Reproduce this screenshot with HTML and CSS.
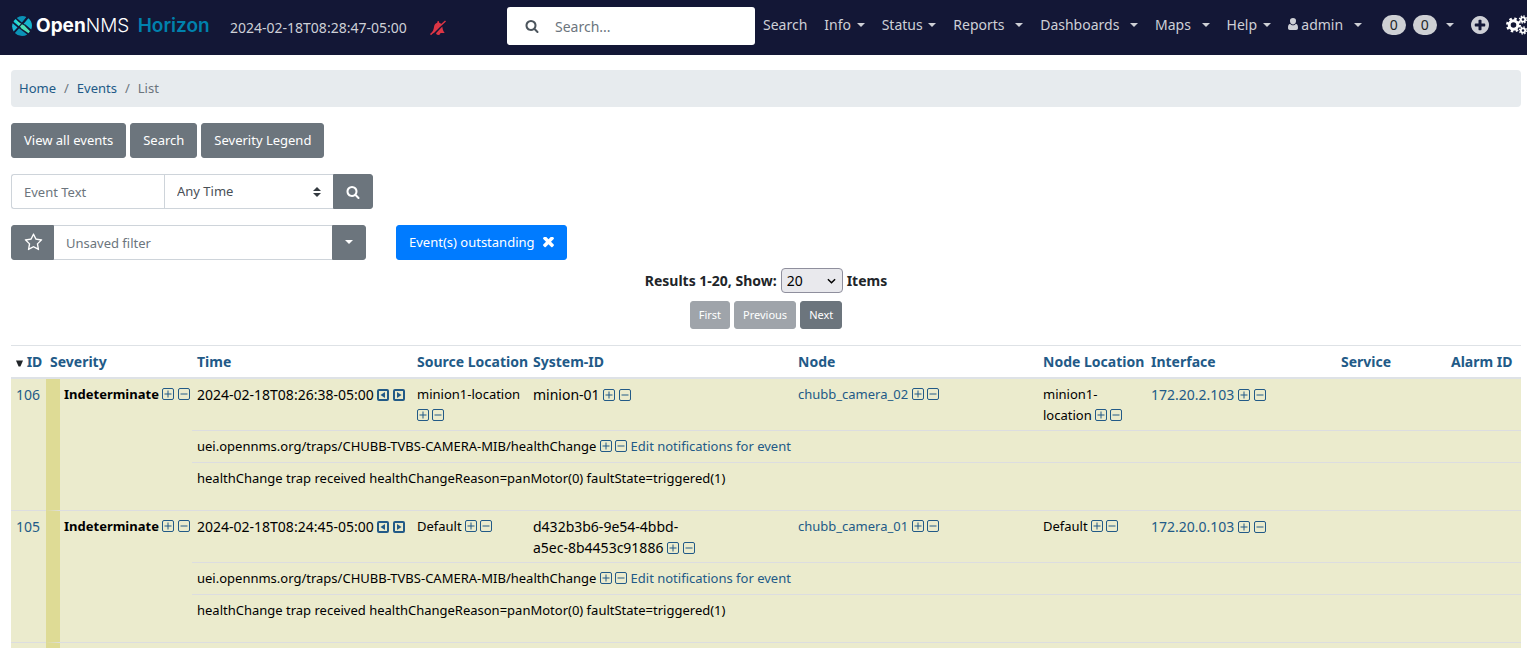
FILE: index.html
```html
<!DOCTYPE html>
<html lang="en">
<head>
<meta charset="utf-8">
<title>Events | OpenNMS Horizon</title>
<link rel="stylesheet" href="styles.css">
</head>
<body>
<svg class="sprite" aria-hidden="true">
  <symbol id="search" viewBox="0 0 1792 1792"><path d="M1216 832q0-185-131.500-316.500t-316.500-131.500-316.500 131.500-131.500 316.500 131.500 316.500 316.500 131.500 316.500-131.500 131.500-316.500zm512 832q0 52-38 90t-90 38q-54 0-90-38l-343-342q-179 124-399 124-143 0-273.500-55.500t-225-150-150-225-55.500-273.500 55.500-273.500 150-225 225-150 273.500-55.500 273.500 55.500 225 150 150 225 55.500 273.500q0 220-124 399l343 343q37 37 37 90z"/></symbol>
  <symbol id="star" viewBox="0 0 1792 1792"><path d="M1201 1004l306-297-422-62-189-382-189 382-422 62 306 297-73 421 378-199 377 199zm527-357q0 22-26 48l-363 354 86 500q1 7 1 20 0 50-41 50-19 0-40-12l-449-236-449 236q-22 12-40 12-21 0-31.500-14.500t-10.500-35.500q0-6 2-20l86-500-364-354q-25-27-25-48 0-37 56-46l502-73 225-455q19-41 49-41t49 41l225 455 502 73q56 9 56 46z"/></symbol>
  <symbol id="times" viewBox="300 450 1192 1192"><path d="M1490 1322q0 40-28 68l-136 136q-28 28-68 28t-68-28l-294-294-294 294q-28 28-68 28t-68-28l-136-136q-28-28-28-68t28-68l294-294-294-294q-28-28-28-68t28-68l136-136q28-28 68-28t68 28l294 294 294-294q28-28 68-28t68 28l136 136q28 28 28 68t-28 68l-294 294 294 294q28 28 28 68z"/></symbol>
  <symbol id="plus-circle" viewBox="128 128 1536 1536"><path d="M1344 960v-128q0-26-19-45t-45-19h-256v-256q0-26-19-45t-45-19h-128q-26 0-45 19t-19 45v256h-256q-26 0-45 19t-19 45v128q0 26 19 45t45 19h256v256q0 26 19 45t45 19h128q26 0 45-19t19-45v-256h256q26 0 45-19t19-45zm320-64q0 209-103 385.500t-279.500 279.500-385.500 103-385.500-103-279.500-279.500-103-385.500 103-385.500 279.500-279.500 385.500-103 385.500 103 279.500 279.500 103 385.500z"/></symbol>
  <symbol id="plus" viewBox="0 0 12 12"><rect x=".5" y=".5" width="11" height="11" rx="1.500" fill="none" stroke="currentColor"/><path d="M2.500 5.500h7v1h-7zM5.500 2.500h1v7h-1z"/></symbol>
  <symbol id="minus" viewBox="0 0 12 12"><rect x=".5" y=".5" width="11" height="11" rx="1.500" fill="none" stroke="currentColor"/><path d="M2.500 5.500h7v1h-7z"/></symbol>
  <symbol id="before" viewBox="0 0 12 12"><rect x="1" y="1" width="10" height="10" rx="1" fill="none" stroke="currentColor" stroke-width="2"/><path d="M8 3v6L3.500 6z"/></symbol>
  <symbol id="after" viewBox="0 0 12 12"><rect x="1" y="1" width="10" height="10" rx="1" fill="none" stroke="currentColor" stroke-width="2"/><path d="M4 3v6l4.500-3z"/></symbol>
</svg>

<header class="navbar">
  <a class="brand" href="#" aria-label="OpenNMS Horizon home">
    <svg class="brand-mark" viewBox="0 0 20 20" aria-hidden="true">
      <path fill="#14d1df" d="M3.600 2.900 9 8.300 6.900 10.300 1.500 5.700A10 10 0 0 1 3.600 2.900z"/>
      <path fill="#0b93b7" d="M4.700 1.900A10 10 0 0 1 14.400 1L10 6.800z"/>
      <path fill="#14b4cd" d="M16.300 2.300A10 10 0 0 1 19.200 13.500L13.400 8.500 11.500 7.900z"/>
      <path fill="#1bb8d5" d="M.6 7.200 5.700 11.600 1.700 15.400A10 10 0 0 1 .6 7.200z"/>
      <path fill="#0b93b7" d="M7 12.300 15.300 18.400A10 10 0 0 1 2.900 17z"/>
      <path fill="#4ee0b5" d="M3 4.200 12.300 9.600 18 15.200 16.500 17.300 9.500 12.600z"/>
      <path stroke="#131736" stroke-width="1.200" d="M15.800.8 1.400 17.200"/>
    </svg>
    <span class="brand-text"><b>Open</b>NMS <span class="brand-product">Horizon</span></span>
  </a>
  <span class="clock">2024-02-18T08:28:47-05:00</span>
  <svg class="bell" viewBox="0 0 16 16" role="img" aria-label="Notices off"><path fill="#dc3545" d="M1 13.200C3 11.500 3.600 9.500 4 7 4.300 4.500 5.800 3 7.300 2.700V2c0-1.200 1.800-1.200 1.800 0v.7c1.200.3 2.200 1.100 2.800 2.200L4 13.200zM12.300 6.600c.3 2.500.8 4.400 2.400 6.400H10.500a2.300 2.300 0 0 1-4.500.3zM0 14 15 .6l1 1L1 15.200z"/><path stroke="#131736" stroke-width=".5" d="M1.500 15.500 16 2.600"/></svg>
  <form class="nav-search">
    <svg class="icon-14" aria-hidden="true"><use href="#search"/></svg>
    <input type="search" aria-label="Search" placeholder="Search...">
  </form>
  <nav class="menu">
    <a href="#">Search</a>
    <a href="#">Info <i class="caret"></i></a>
    <a href="#">Status <i class="caret"></i></a>
    <a href="#">Reports <i class="caret wide"></i></a>
    <a href="#">Dashboards <i class="caret wide"></i></a>
    <a href="#">Maps <i class="caret wide"></i></a>
    <a href="#">Help <i class="caret"></i></a>
    <a href="#"><svg class="user" viewBox="0 0 10 12" aria-hidden="true"><path d="M5 0a3 3 0 0 1 3 3.200C8 5 6.700 6.500 5 6.500S2 5 2 3.200A3 3 0 0 1 5 0zM2.200 5.800C3.500 7.800 6.500 7.800 7.800 5.800 9.400 6 10 7.500 10 10c0 1.300-.7 2-1.800 2H1.800C.7 12 0 11.300 0 10c0-2.500.6-4 2.200-4.200z"/></svg> admin <i class="caret wide"></i></a>
    <a class="notices" href="#"><span class="badge">0</span><span class="badge">0</span><i class="caret"></i></a>
    <a href="#" aria-label="Quick add"><svg class="add" aria-hidden="true"><use href="#plus-circle"/></svg></a>
    <a href="#" aria-label="Configure"><svg class="cogs" viewBox="0 0 22 20" aria-hidden="true"><circle cx="7.500" cy="10" r="4.300" stroke-width="3"/><circle cx="7.500" cy="10" r="6.300" stroke-width="2.400" stroke-dasharray="2.480 2.468"/><circle cx="17" cy="4.500" r="2.200" stroke-width="1.800"/><circle cx="17" cy="4.500" r="3.500" stroke-width="1.400" stroke-dasharray="1.370 1.379"/><circle cx="17" cy="15.500" r="2.200" stroke-width="1.800"/><circle cx="17" cy="15.500" r="3.500" stroke-width="1.400" stroke-dasharray="1.370 1.379"/></svg></a>
  </nav>
</header>

<main class="content">
  <nav class="breadcrumb" aria-label="Breadcrumb">
    <a href="#">Home</a><span>/</span><a href="#">Events</a><span>/</span><span>List</span>
  </nav>

  <div class="actions">
    <button class="btn" type="button">View all events</button>
    <button class="btn" type="button">Search</button>
    <button class="btn" type="button">Severity Legend</button>
  </div>

  <form class="group">
    <input class="field event-text" type="text" aria-label="Event text" placeholder="Event Text">
    <select class="field time-select" aria-label="Time range"><option>Any Time</option></select>
    <button class="btn" type="button" aria-label="Search events"><svg class="icon-14" aria-hidden="true"><use href="#search"/></svg></button>
  </form>

  <div class="filters">
    <div class="group">
      <button class="btn btn-star" type="button" aria-label="Save filter"><svg class="star" aria-hidden="true"><use href="#star"/></svg></button>
      <input class="field filter-name" type="text" aria-label="Filter name" placeholder="Unsaved filter">
      <button class="btn" type="button" aria-label="Choose filter"><i class="caret"></i></button>
    </div>
    <button class="btn btn-primary" type="button">Event(s) outstanding <svg class="times" aria-hidden="true"><use href="#times"/></svg></button>
  </div>

  <div class="results">
    <label for="limit">Results 1-20, Show:</label>
    <select id="limit" class="limit"><option>20</option></select>
    <span>Items</span>
  </div>
  <div class="pager">
    <button class="btn btn-sm" type="button" disabled>First</button>
    <button class="btn btn-sm" type="button" disabled>Previous</button>
    <button class="btn btn-sm" type="button">Next</button>
  </div>

  <table class="events">
    <colgroup><col class="c-id"><col class="c-severity"><col class="c-time"><col class="c-source"><col class="c-system"><col class="c-node"><col class="c-nodeloc"><col class="c-interface"><col class="c-service"><col class="c-alarm"></colgroup>
    <thead>
      <tr>
        <th class="sorted"><svg class="sort" viewBox="0 0 8 7" aria-hidden="true"><path d="M0 0h8L5 7H3z"/></svg> <a href="#">ID</a></th>
        <th class="sev-head"><a href="#">Severity</a></th>
        <th><a href="#">Time</a></th>
        <th><a href="#">Source Location</a></th>
        <th><a href="#">System-ID</a></th>
        <th><a href="#">Node</a></th>
        <th><a href="#">Node Location</a></th>
        <th><a href="#">Interface</a></th>
        <th><a href="#">Service</a></th>
        <th><a href="#">Alarm ID</a></th>
      </tr>
    </thead>
    <tbody>
      <tr class="main">
        <td class="value" rowspan="3"><a href="#">106</a></td>
        <td class="severity" rowspan="3"><b>Indeterminate</b> <span class="pair"><a href="#" aria-label="Only this severity"><svg><use href="#plus"/></svg></a> <a href="#" aria-label="Exclude this severity"><svg><use href="#minus"/></svg></a></span></td>
        <td class="time value">2024-02-18T08:26:38-05:00 <span class="pair"><a href="#" aria-label="Before this"><svg><use href="#before"/></svg></a> <a href="#" aria-label="After this"><svg><use href="#after"/></svg></a></span></td>
        <td>minion1-location <span class="pair"><a href="#" aria-label="Only this location"><svg><use href="#plus"/></svg></a> <a href="#" aria-label="Exclude this location"><svg><use href="#minus"/></svg></a></span></td>
        <td class="value">minion-01 <span class="pair"><a href="#" aria-label="Only this system"><svg><use href="#plus"/></svg></a> <a href="#" aria-label="Exclude this system"><svg><use href="#minus"/></svg></a></span></td>
        <td><a href="#">chubb_camera_02</a> <span class="pair"><a href="#" aria-label="Only this node"><svg><use href="#plus"/></svg></a> <a href="#" aria-label="Exclude this node"><svg><use href="#minus"/></svg></a></span></td>
        <td>minion1-<br>location <span class="pair"><a href="#" aria-label="Only this node location"><svg><use href="#plus"/></svg></a> <a href="#" aria-label="Exclude this node location"><svg><use href="#minus"/></svg></a></span></td>
        <td class="value"><a href="#">172.20.2.103</a> <span class="pair"><a href="#" aria-label="Only this interface"><svg><use href="#plus"/></svg></a> <a href="#" aria-label="Exclude this interface"><svg><use href="#minus"/></svg></a></span></td>
        <td></td>
        <td></td>
      </tr>
      <tr><td colspan="8">uei.opennms.org/traps/CHUBB-TVBS-CAMERA-MIB/healthChange <span class="pair"><a href="#" aria-label="Only this UEI"><svg><use href="#plus"/></svg></a> <a href="#" aria-label="Exclude this UEI"><svg><use href="#minus"/></svg></a></span> <a href="#">Edit notifications for event</a></td></tr>
      <tr class="message"><td colspan="8">healthChange trap received healthChangeReason=panMotor(0) faultState=triggered(1)</td></tr>
    </tbody>
    <tbody>
      <tr class="main">
        <td class="value" rowspan="3"><a href="#">105</a></td>
        <td class="severity" rowspan="3"><b>Indeterminate</b> <span class="pair"><a href="#" aria-label="Only this severity"><svg><use href="#plus"/></svg></a> <a href="#" aria-label="Exclude this severity"><svg><use href="#minus"/></svg></a></span></td>
        <td class="time value">2024-02-18T08:24:45-05:00 <span class="pair"><a href="#" aria-label="Before this"><svg><use href="#before"/></svg></a> <a href="#" aria-label="After this"><svg><use href="#after"/></svg></a></span></td>
        <td>Default <span class="pair"><a href="#" aria-label="Only this location"><svg><use href="#plus"/></svg></a> <a href="#" aria-label="Exclude this location"><svg><use href="#minus"/></svg></a></span></td>
        <td class="value">d432b3b6-9e54-4bbd-<br>a5ec-8b4453c91886 <span class="pair"><a href="#" aria-label="Only this system"><svg><use href="#plus"/></svg></a> <a href="#" aria-label="Exclude this system"><svg><use href="#minus"/></svg></a></span></td>
        <td><a href="#">chubb_camera_01</a> <span class="pair"><a href="#" aria-label="Only this node"><svg><use href="#plus"/></svg></a> <a href="#" aria-label="Exclude this node"><svg><use href="#minus"/></svg></a></span></td>
        <td>Default <span class="pair"><a href="#" aria-label="Only this node location"><svg><use href="#plus"/></svg></a> <a href="#" aria-label="Exclude this node location"><svg><use href="#minus"/></svg></a></span></td>
        <td class="value"><a href="#">172.20.0.103</a> <span class="pair"><a href="#" aria-label="Only this interface"><svg><use href="#plus"/></svg></a> <a href="#" aria-label="Exclude this interface"><svg><use href="#minus"/></svg></a></span></td>
        <td></td>
        <td></td>
      </tr>
      <tr><td colspan="8">uei.opennms.org/traps/CHUBB-TVBS-CAMERA-MIB/healthChange <span class="pair"><a href="#" aria-label="Only this UEI"><svg><use href="#plus"/></svg></a> <a href="#" aria-label="Exclude this UEI"><svg><use href="#minus"/></svg></a></span> <a href="#">Edit notifications for event</a></td></tr>
      <tr class="message"><td colspan="8">healthChange trap received healthChangeReason=panMotor(0) faultState=triggered(1)</td></tr>
    </tbody>
    <tbody>
      <tr class="next"><td></td><td class="severity"></td><td colspan="8"></td></tr>
    </tbody>
  </table>
</main>
</body>
</html>
```
FILE: styles.css
```css
* { box-sizing: border-box; }

body {
  margin: 0;
  overflow-x: hidden;
  background: #fff;
  color: #212529;
  font: 13px/21px "Noto Sans", "Open Sans", sans-serif;
}

a { color: #225a87; text-decoration: none; }
button, input, select { font: inherit; }
svg { fill: currentColor; }
.sprite { display: none; }
.icon-14 { display: block; width: 14px; height: 14px; }

.caret {
  display: inline-block;
  margin-left: 2px;
  border: 4px solid transparent;
  border-top-color: currentColor;
  border-bottom: 0;
  vertical-align: 3px;
}
.caret.wide { margin-left: 7px; }

/* Top bar */
.navbar {
  display: flex;
  align-items: center;
  height: 55px;
  padding: 0 0 3px 12px;
  background: #131736;
  color: #ced0d6;
  font-size: 14px;
  white-space: nowrap;
}
.navbar > * { flex: none; }
.brand { display: flex; align-items: center; gap: 4px; width: 218px; color: #fff; }
.brand-mark { width: 20px; height: 20px; }
.brand-text { font: 300 19px/24px Inter, sans-serif; }
.brand-text b { font-weight: 700; }
.brand-product { margin-left: 3px; color: #0081ad; font-weight: 600; }
.clock { width: 200px; padding-top: 2px; }
.bell { width: 16px; height: 16px; margin-top: 3px; }
.nav-search {
  display: flex;
  align-items: center;
  gap: 16px;
  width: 248px;
  height: 38px;
  margin-left: 61px;
  padding: 0 18px;
  border-radius: 3px;
  background: #fff;
  color: #4c555d;
}
.nav-search input { flex: 1; min-width: 0; border: 0; padding: 0; outline: 0; background: none; }
input::placeholder { color: #6c757d; opacity: 1; }
.menu { display: flex; align-items: center; gap: 17px; margin-left: 8px; padding-bottom: 3px; }
.menu a { flex: none; color: inherit; }
.user { width: 10px; height: 12px; }
.menu .notices { display: flex; align-items: center; gap: 7px; margin-left: 3px; }
.badge {
  padding: 0 8px;
  border-radius: 10px;
  background: #ced0d4;
  color: #212529;
  line-height: 20px;
}
.add { display: block; width: 18px; height: 18px; }
.cogs { display: block; width: 22px; height: 20px; fill: none; stroke: #fff; }

/* Page body */
.content { padding: 15px 6px 0 11px; }
.breadcrumb {
  display: flex;
  gap: 8px;
  padding: 8px;
  border-radius: 4px;
  background: #e7ebee;
  color: #6c757d;
}
.actions { display: flex; gap: 4px; margin: 16px 0; }
.btn {
  min-height: 35px;
  padding: 6px 12px;
  border: 1px solid #6c757d;
  border-radius: 3px;
  background: #6c757d;
  color: #fff;
}
.btn:disabled { opacity: .65; }
.btn svg { display: block; }
.btn-primary { display: flex; align-items: center; gap: 8px; border-color: #007bff; background: #007bff; }
.times { width: 11px; height: 11px; }
.btn-sm { min-height: 28px; padding: 3px 8px; font-size: 11px; line-height: 20px; }

.group { display: flex; }
.group > :not(:first-child) { border-top-left-radius: 0; border-bottom-left-radius: 0; }
.group > :not(:last-child) { border-top-right-radius: 0; border-bottom-right-radius: 0; }
.field {
  height: 35px;
  padding: 6px 12px;
  border: 1px solid #ced4da;
  border-radius: 3px;
  background: #fff;
  color: #495057;
}
.event-text { width: 153px; border-right: 0; }
.time-select {
  width: 169px;
  border-right: 0;
  appearance: none;
  background: #fff url("data:image/svg+xml,%3Csvg xmlns='http://www.w3.org/2000/svg' viewBox='0 0 8 10'%3E%3Cpath fill='%23343a40' d='M4 0 0 4h8zM4 10 0 6h8z'/%3E%3C/svg%3E") no-repeat right 12px center / 8px 10px;
}
.filters { display: flex; gap: 30px; margin: 16px 0 8px; }
.btn-star { width: 43px; }
.star { width: 19px; height: 19px; }
.filter-name { width: 278px; border-left: 0; border-right: 0; }
.group .caret { margin: 0; }

.results { display: flex; justify-content: center; align-items: center; gap: 4px; font-size: 14px; font-weight: 700; }
.limit {
  width: 62px;
  height: 25px;
  padding: 0 5px;
  border: 1px solid #8f8f9d;
  border-radius: 4px;
  appearance: none;
  color: #000;
  font-weight: 400;
  background: #e9e9ed url("data:image/svg+xml,%3Csvg xmlns='http://www.w3.org/2000/svg' viewBox='0 0 10 6'%3E%3Cpath fill='none' stroke='%23000' stroke-width='1.600' d='M1 1l4 4 4-4'/%3E%3C/svg%3E") no-repeat right 6px center / 9px 6px;
}
.pager { display: flex; justify-content: center; gap: 4px; margin: 8px 0 16px; }

/* Events */
.events { width: 100%; table-layout: fixed; border-spacing: 0; color: #000; }
.c-id { width: 35px; }
.c-severity { width: 146px; }
.c-time { width: 220px; }
.c-source { width: 116px; }
.c-system { width: 265px; }
.c-node { width: 245px; }
.c-nodeloc { width: 108px; }
.c-interface { width: 190px; }
.c-service { width: 110px; }
.c-alarm { width: 75px; }
.events th {
  padding: 5px;
  border-top: 1px solid #dee2e6;
  border-bottom: 2px solid #dee2e6;
  font-size: 14px;
  text-align: left;
  white-space: nowrap;
}
.events th.sev-head { padding-left: 4px; }
.sort { width: 7px; height: 7px; color: #212529; }
.events td {
  padding: 5px;
  border-top: 1px solid #dcdde0;
  background: #ebebcd;
  vertical-align: top;
}
.events .value { font-size: 14px; }
.events .main td { padding-bottom: 4px; }
.events thead + tbody .main td { border-top: 0; }
.events td.severity { padding: 5px 0 0 4px; border-left: 14px solid #dedb95; white-space: nowrap; }
.events .time { white-space: nowrap; }
.events .message td { padding-bottom: 21px; }
.events .next td { height: 6px; padding: 0; }
.pair { white-space: nowrap; }
.pair svg { width: 12px; height: 12px; vertical-align: -1px; }
```
